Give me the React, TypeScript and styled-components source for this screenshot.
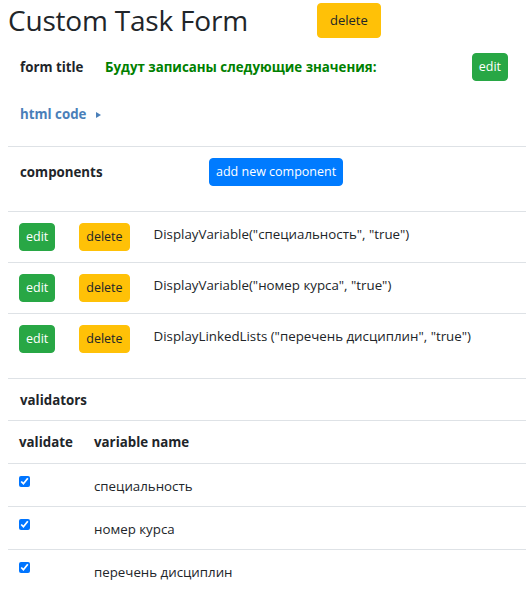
import React from "react";
import styled, { createGlobalStyle, css } from "styled-components";

const GlobalStyle = createGlobalStyle`
  html, body { margin: 0; padding: 0; background: #fff; }
  body {
    font-family: "Open Sans", "Noto Sans", sans-serif;
    color: #212529;
    font-size: 13.3px;
    line-height: 21px;
  }
  * { box-sizing: border-box; }
`;

const Page = styled.div`
  padding-left: 8px;
  overflow: hidden;
`;

const Header = styled.header`
  display: grid;
  grid-template-columns: 309px auto;
  align-items: center;
  height: 40px;
  justify-content: start;
`;

const Title = styled.h3`
  margin: 0;
  font-size: 28px;
  font-weight: 500;
  line-height: 34px;
  letter-spacing: -0.2px;
`;

type Variant = "warning" | "success" | "primary";

const variants: Record<Variant, ReturnType<typeof css>> = {
  warning: css`
    background: #ffc107;
    border-color: #ffc107;
    color: #212529;
  `,
  success: css`
    background: #28a745;
    border-color: #28a745;
    color: #fff;
  `,
  primary: css`
    background: #007bff;
    border-color: #007bff;
    color: #fff;
  `,
};

const Button = styled.button<{ $variant: Variant; $size?: "sm" | "md" }>`
  display: inline-flex;
  align-items: center;
  justify-content: center;
  border: 1px solid transparent;
  border-radius: 4px;
  font-family: inherit;
  font-size: ${(p) => (p.$size === "md" ? "13px" : "12.5px")};
  line-height: 1;
  white-space: nowrap;
  cursor: pointer;
  height: ${(p) => (p.$size === "md" ? "35px" : "28px")};
  padding: ${(p) => (p.$size === "md" ? "0 12px" : "0 6px")};
  ${(p) => variants[p.$variant]}
`;

const FormSection = styled.section`
  padding: 13px 18px 21px 11px;
`;

const FormTitleRow = styled.div`
  display: grid;
  grid-template-columns: 62px 1fr auto;
  column-gap: 24px;
  align-items: center;
`;

const Label = styled.span`
  font-weight: 700;
  padding-left: 1px;
  white-space: nowrap;
`;

const Notice = styled.span`
  font-weight: 700;
  color: #008000;
  white-space: nowrap;
`;

const CodeToggle = styled.div`
  margin-top: 23px;
  display: flex;
  align-items: center;
  gap: 10px;
  padding-left: 1px;
  font-weight: 700;
  color: #4a7fb9;
`;

const Caret = styled.span`
  width: 0;
  height: 0;
  border-left: 5px solid #4a7fb9;
  border-top: 3.5px solid transparent;
  border-bottom: 3.5px solid transparent;
`;

const Section = styled.section<{ $padTop?: number; $padBottom?: number }>`
  border-top: 1px solid #dee2e6;
  padding: ${(p) => p.$padTop ?? 11}px 12px ${(p) => p.$padBottom ?? 11}px 11px;
`;

const ComponentsHead = styled.div`
  display: grid;
  grid-template-columns: 166px auto;
  column-gap: 24px;
  align-items: center;
  justify-content: start;
`;

const ComponentRow = styled.div<{ $last?: boolean }>`
  border-top: 1px solid #dee2e6;
  padding: 11px 12px ${(p) => (p.$last ? 25 : 11)}px 11px;
  display: grid;
  grid-template-columns: auto auto 1fr;
  column-gap: 24px;
  align-items: start;
`;

const Expression = styled.span`
  padding-top: 1px;
  white-space: nowrap;
`;

const TableRow = styled.div<{ $head?: boolean }>`
  border-top: 1px solid #dee2e6;
  display: grid;
  grid-template-columns: 51px 1fr;
  column-gap: 24px;
  padding: ${(p) => (p.$head ? "11px 12px 10px 11px" : "12px 12px 9px 11px")};
  font-weight: ${(p) => (p.$head ? 700 : 400)};
  align-items: start;
  white-space: nowrap;
`;

const Check = styled.input`
  width: 11px;
  height: 11px;
  margin: 0;
  accent-color: #0075ff;
`;

const components = [
  'DisplayVariable("специальность", "true")',
  'DisplayVariable("номер курса", "true")',
  'DisplayLinkedLists ("перечень дисциплин", "true")',
];

const variables = ["специальность", "номер курса", "перечень дисциплин"];

export default function App() {
  return (
    <Page>
      <GlobalStyle />
      <Header>
        <Title>Custom Task Form</Title>
        <Button $variant="warning" $size="md">delete</Button>
      </Header>

      <FormSection>
        <FormTitleRow>
          <Label>form title</Label>
          <Notice>Будут записаны следующие значения:</Notice>
          <Button $variant="success">edit</Button>
        </FormTitleRow>
        <CodeToggle>
          html code <Caret />
        </CodeToggle>
      </FormSection>

      <Section $padTop={11} $padBottom={25}>
        <ComponentsHead>
          <Label>components</Label>
          <Button $variant="primary">add new component</Button>
        </ComponentsHead>
      </Section>

      {components.map((c, i) => (
        <ComponentRow key={c} $last={i === components.length - 1}>
          <Button $variant="success">edit</Button>
          <Button $variant="warning">delete</Button>
          <Expression>{c}</Expression>
        </ComponentRow>
      ))}

      <Section $padTop={11} $padBottom={9}>
        <Label>validators</Label>
      </Section>

      <TableRow $head>
        <span>validate</span>
        <span>variable name</span>
      </TableRow>
      {variables.map((v) => (
        <TableRow key={v}>
          <Check type="checkbox" defaultChecked />
          <span>{v}</span>
        </TableRow>
      ))}
    </Page>
  );
}
